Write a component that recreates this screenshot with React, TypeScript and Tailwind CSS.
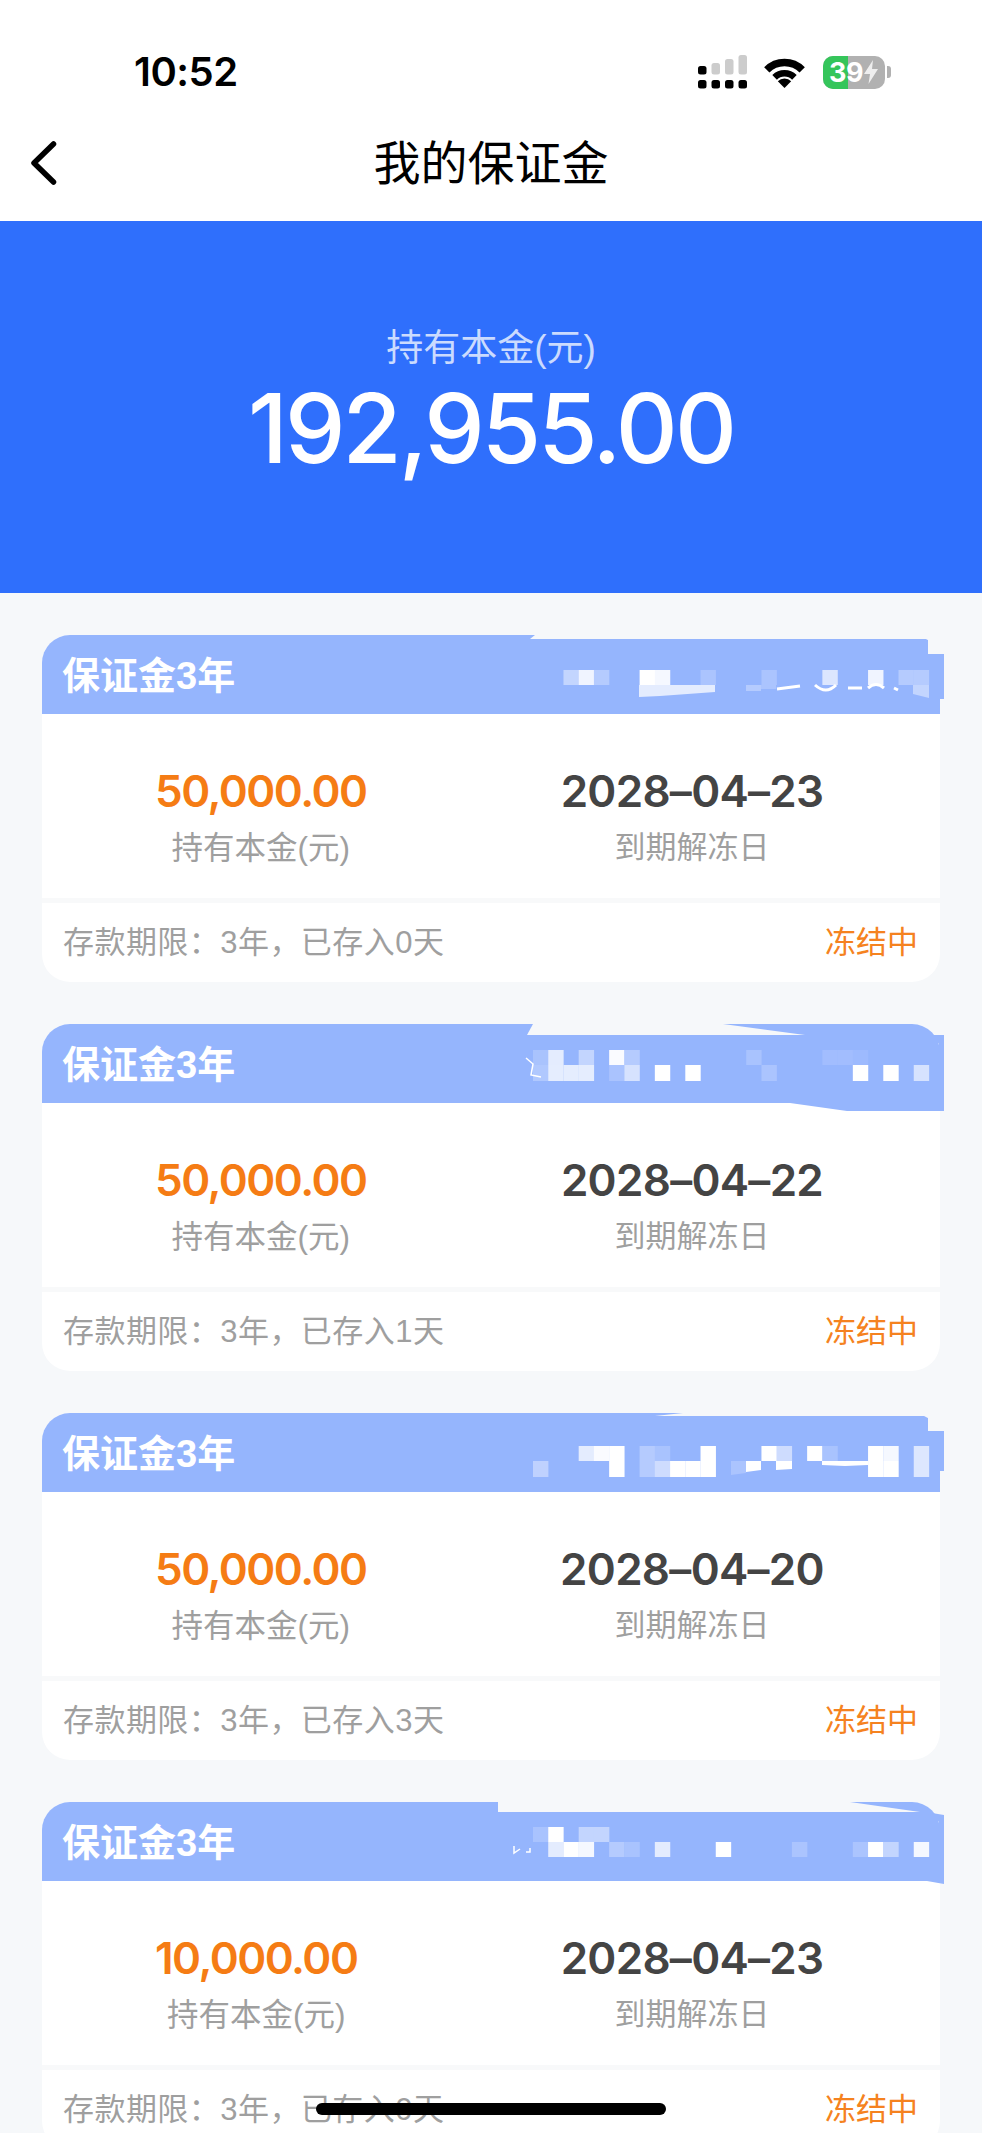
const BLUE = "#95b5fd";
const BG = "#f6f8fa";
const W = "#ffffff";

type Cell = [number, number, string];
type Strip = { rows: [number, number][]; cells: Cell[]; };

function Cells({ rows, cells }: Strip) {
  return (
    <>
      {cells.map(([c, r, color], i) => (
        <rect key={i} x={533 + c * 15.23} y={rows[r][0]} width={15.4} height={rows[r][1] - rows[r][0]} fill={color} />
      ))}
    </>
  );
}

function Overlay({ children }: { children: React.ReactNode }) {
  return (
    <svg className="absolute left-0 top-0 w-[910px] h-[90px] overflow-visible" viewBox="42 0 910 90" aria-hidden="true">
      {children}
    </svg>
  );
}

function Redact1() {
  return (
    <Overlay>
      <path d="M535 0 L530 4 L928 4 L928 19 L945 19 L945 0 Z" fill={BG} />
      <path d="M928 19 H944 V64 H928 Z" fill={BLUE} />
      <Cells
        rows={[[35, 50], [50, 62]]}
        cells={[
          [2, 0, "#c3d5fe"], [3, 0, "#f0f4ff"], [4, 0, "#b5cbfe"], [7, 0, W], [8, 0, "#f5f8ff"], [11, 0, "#abc4fe"],
          [15, 0, "#abc4fe"], [19, 0, "#dce6fe"], [22, 0, "#f0f4ff"], [24, 0, "#b5cbfe"], [25, 0, "#b5cbfe"],
        ]}
      />
      <path d="M639 50 H715 V57 L660 61 L639 62 Z" fill="#e4ecfe" />
      <rect x="746" y="50" width="15" height="6" fill="#b5cbfe" />
      <rect x="761" y="50" width="15" height="4" fill="#abc4fe" />
      <path d="M777 54 L800 51 M815 50 Q826 60 836 50 M848 53 H862 M868 53 Q876 46 884 53 M894 53 L898 55" stroke={W} strokeWidth="3" fill="none" />
      <path d="M913 50 H929 V63 L913 59 Z" fill="#c3d5fe" />
    </Overlay>
  );
}

function Redact2() {
  return (
    <Overlay>
      <path d="M533 0 L527 11 H805 L723 0 Z" fill={BG} />
      <path d="M932 11 H944 V87 H847 L790 79 H939 V20 Z" fill={BLUE} />
      <Cells
        rows={[[26, 41], [41, 57]]}
        cells={[
          [0, 0, "#a9c3fd"], [1, 0, "#e4ecfe"], [3, 0, "#c3d5fe"], [5, 0, "#fafbff"], [6, 0, "#b5cbfe"], [14, 0, "#a9c3fe"],
          [19, 0, "#a2bdfe"], [20, 0, "#a2bdfe"], [21, 0, "#9dbafe"],
          [0, 1, "#b0c8fe"], [1, 1, "#e5edfe"], [2, 1, "#e5edfe"], [3, 1, "#e5edfe"], [5, 1, "#aac3fe"], [6, 1, "#d6e2fe"],
          [8, 1, W], [10, 1, W], [15, 1, "#abc4fe"], [21, 1, W], [23, 1, W], [25, 1, "#d6e2fe"],
        ]}
      />
      <path d="M526 34 L533 40 L531 51 L541 53" stroke={W} strokeWidth="1.5" fill="none" />
    </Overlay>
  );
}

function Redact3() {
  return (
    <Overlay>
      <path d="M683 0 L655 3 H928 V18 H945 V0 Z" fill={BG} />
      <path d="M928 18 H944 V58 H928 Z" fill={BLUE} />
      <Cells
        rows={[[33, 48], [48, 64]]}
        cells={[
          [3, 0, "#e4ecfe"], [4, 0, "#fafbff"], [5, 0, W], [7, 0, "#b5cbfe"], [8, 0, "#a9c3fe"], [11, 0, W], [15, 0, W],
          [16, 0, "#cedcfe"], [18, 0, W], [19, 0, "#a9c3fe"], [22, 0, W], [23, 0, "#f5f8ff"], [25, 0, "#dde7fe"],
          [0, 1, "#bfd1fe"], [5, 1, W], [7, 1, "#b5cbfe"], [8, 1, "#cedcfe"], [9, 1, W], [10, 1, W], [11, 1, W],
          [22, 1, W], [23, 1, W], [25, 1, "#dde7fe"],
        ]}
      />
      <path d="M731 48 H746 V60 L731 62 Z" fill="#abc4fe" />
      <path d="M746 48 H761 V57 L746 59 Z" fill={W} />
      <path d="M776 48 H792 V56 L776 57 Z" fill={W} />
      <path d="M822 48 H868 V52 L845 53 L822 52 Z" fill={W} />
    </Overlay>
  );
}

function Redact4() {
  return (
    <Overlay>
      <path d="M498 0 V10 H920 L850 0 Z" fill={BG} />
      <path d="M932 11 L944 13 V82 L927 79 H939 V20 Z" fill={BLUE} />
      <Cells
        rows={[[25, 40], [40, 55]]}
        cells={[
          [0, 0, "#a9c3fe"], [1, 0, W], [3, 0, "#c3d5fe"], [4, 0, "#c3d5fe"],
          [1, 1, "#e4ecfe"], [2, 1, W], [3, 1, "#f5f8ff"], [5, 1, "#b5cbfe"], [6, 1, "#a9c3fe"], [8, 1, "#e4ecfe"],
          [12, 1, W], [17, 1, "#abc4fe"], [21, 1, "#abc4fe"], [22, 1, W], [23, 1, "#c3d5fe"], [25, 1, "#f5f8ff"],
        ]}
      />
      <path d="M514 44 V51 L520 47 M526 50 H530 V46" stroke={W} strokeWidth="1.5" fill="none" />
    </Overlay>
  );
}

const CARDS = [
  { value: "50,000.00", date: "2028\u201304\u201323", days: 0, Redact: Redact1 },
  { value: "50,000.00", date: "2028\u201304\u201322", days: 1, Redact: Redact2 },
  { value: "50,000.00", date: "2028\u201304\u201320", days: 3, Redact: Redact3 },
  { value: "10,000.00", date: "2028\u201304\u201323", days: 0, Redact: Redact4 },
];

function Card({ value, date, days, Redact }: (typeof CARDS)[number]) {
  return (
    <div className="relative">
      <div className="rounded-[28px] overflow-hidden bg-white">
        <div className="h-[79px] bg-[#95b5fd] flex items-center pl-[20px] pt-[3px] text-white text-[38px] font-bold leading-none">
          保证金3年
        </div>
        <div className="h-[184px] flex pt-[50px]">
          <div className="w-[520px] pl-[113px] flex">
            <div className="flex flex-col items-center">
              <div className="font-['Inter'] text-[#f57c14] text-[44px] leading-[54px] font-semibold tracking-[-1.5px]">{value}</div>
              <div className="text-[#9f9f9f] text-[31.5px] leading-[40px] mt-[10px]">持有本金(元)</div>
            </div>
          </div>
          <div className="w-[260px] flex flex-col items-center">
            <div className="font-['Inter'] text-[#444444] text-[44px] leading-[54px] font-semibold whitespace-nowrap tracking-[-0.7px]">{date}</div>
            <div className="text-[#9f9f9f] text-[31px] leading-[40px] mt-[10px]">到期解冻日</div>
          </div>
        </div>
        <div className="h-[5px] bg-[#f8f9fa]" />
        <div className="h-[79px] flex items-center justify-between pl-[21px] pr-[22px] text-[31px] leading-none">
          <span className="text-[#9f9f9f] tracking-[0.45px]">{"存款期限\uFF1A3年\uFF0C已存入"}{days}天</span>
          <span className="text-[#f58220]">冻结中</span>
        </div>
      </div>
      <Redact />
    </div>
  );
}

function Signal() {
  const cols = [697, 710.5, 724, 737.5];
  return (
    <svg width="50" height="34" viewBox="697 55 50 34">
      {cols.map((x) => (
        <rect key={x} x={x} y={80} width={8.5} height={8.5} rx={2.5} fill="#000" />
      ))}
      <rect x="697" y="66" width="8.5" height="8.5" rx="2.5" fill="#000" />
      <rect x="710.5" y="63" width="8.5" height="11.5" rx="2.5" fill="#cccccc" />
      <rect x="724" y="59" width="8.5" height="15.5" rx="2.5" fill="#cccccc" />
      <rect x="737.5" y="55" width="8.5" height="19.5" rx="2.5" fill="#cccccc" />
    </svg>
  );
}

function Wifi() {
  return (
    <svg width="43" height="31" viewBox="0 0 43 31">
      <path d="M3.8 12.8 A25 25 0 0 1 39.2 12.8" fill="none" stroke="#000" strokeWidth="7.5" />
      <path d="M11.6 20.4 A14 14 0 0 1 31.4 20.4" fill="none" stroke="#000" strokeWidth="6.5" />
      <path d="M21.5 31 L14.8 24.3 A9.5 9.5 0 0 1 28.2 24.3 Z" fill="#000" />
    </svg>
  );
}

function Battery() {
  return (
    <div className="flex items-center gap-[2px]">
      <div className="relative w-[62px] h-[33px] rounded-[10px] overflow-hidden bg-[#b1b1b1] flex items-center pl-[6px]">
        <div className="absolute left-0 top-0 bottom-0 w-[25px] bg-[#35c55b]" />
        <span className="relative font-['Inter'] text-white text-[27px] font-bold leading-none tracking-[-0.5px]">39</span>
        <svg className="relative ml-[1px]" width="14" height="24" viewBox="0 0 14 24">
          <path d="M9 0 L0 14 H6 L4.5 24 L14 9 H8 Z" fill="#eeeeee" />
        </svg>
      </div>
      <div className="w-[4px] h-[12px] rounded-r-[3px] bg-[#b1b1b1]" />
    </div>
  );
}

export default function App() {
  return (
    <div className="relative h-[2133px] overflow-hidden bg-[#f6f8fa] font-['Liberation_Sans','Noto_Sans_CJK_SC',sans-serif]">
      <div className="h-[221px] bg-white">
        <div className="pt-[50px]">
          <div className="h-[44px] flex items-center justify-between pl-[134px] pr-[91px]">
            <span className="font-['Inter'] text-[40px] leading-none font-semibold text-black tracking-[-0.5px]">10:52</span>
            <div className="flex items-center">
              <Signal />
              <div className="ml-[15px]"><Wifi /></div>
              <div className="ml-[17px]"><Battery /></div>
            </div>
          </div>
        </div>
        <div className="mt-[38px] h-[60px] grid grid-cols-[1fr_auto_1fr] items-center">
          <svg className="ml-[29px]" width="32" height="46" viewBox="0 0 32 46">
            <path d="M24.5 5 L5 24 L24.5 43" fill="none" stroke="#000" strokeWidth="5.5" strokeLinecap="round" strokeLinejoin="round" />
          </svg>
          <div className="text-[47px] leading-none text-black pt-[3px]">我的保证金</div>
          <div />
        </div>
      </div>

      <div className="h-[372px] bg-[#2f6ffc] flex flex-col items-center pt-[106px]">
        <div className="text-[37px] leading-[44px] text-white/75">持有本金(元)</div>
        <div className="font-['Inter'] mt-[7px] text-[96px] leading-[100px] font-medium tracking-[-2.9px] text-white">192,955.00</div>
      </div>

      <div className="px-[42px] pt-[42px] flex flex-col gap-[42px]">
        {CARDS.map((c, i) => (
          <Card key={i} {...c} />
        ))}
      </div>

      <div className="absolute left-[316px] top-[2103px] w-[350px] h-[12px] rounded-full bg-black" />
    </div>
  );
}
